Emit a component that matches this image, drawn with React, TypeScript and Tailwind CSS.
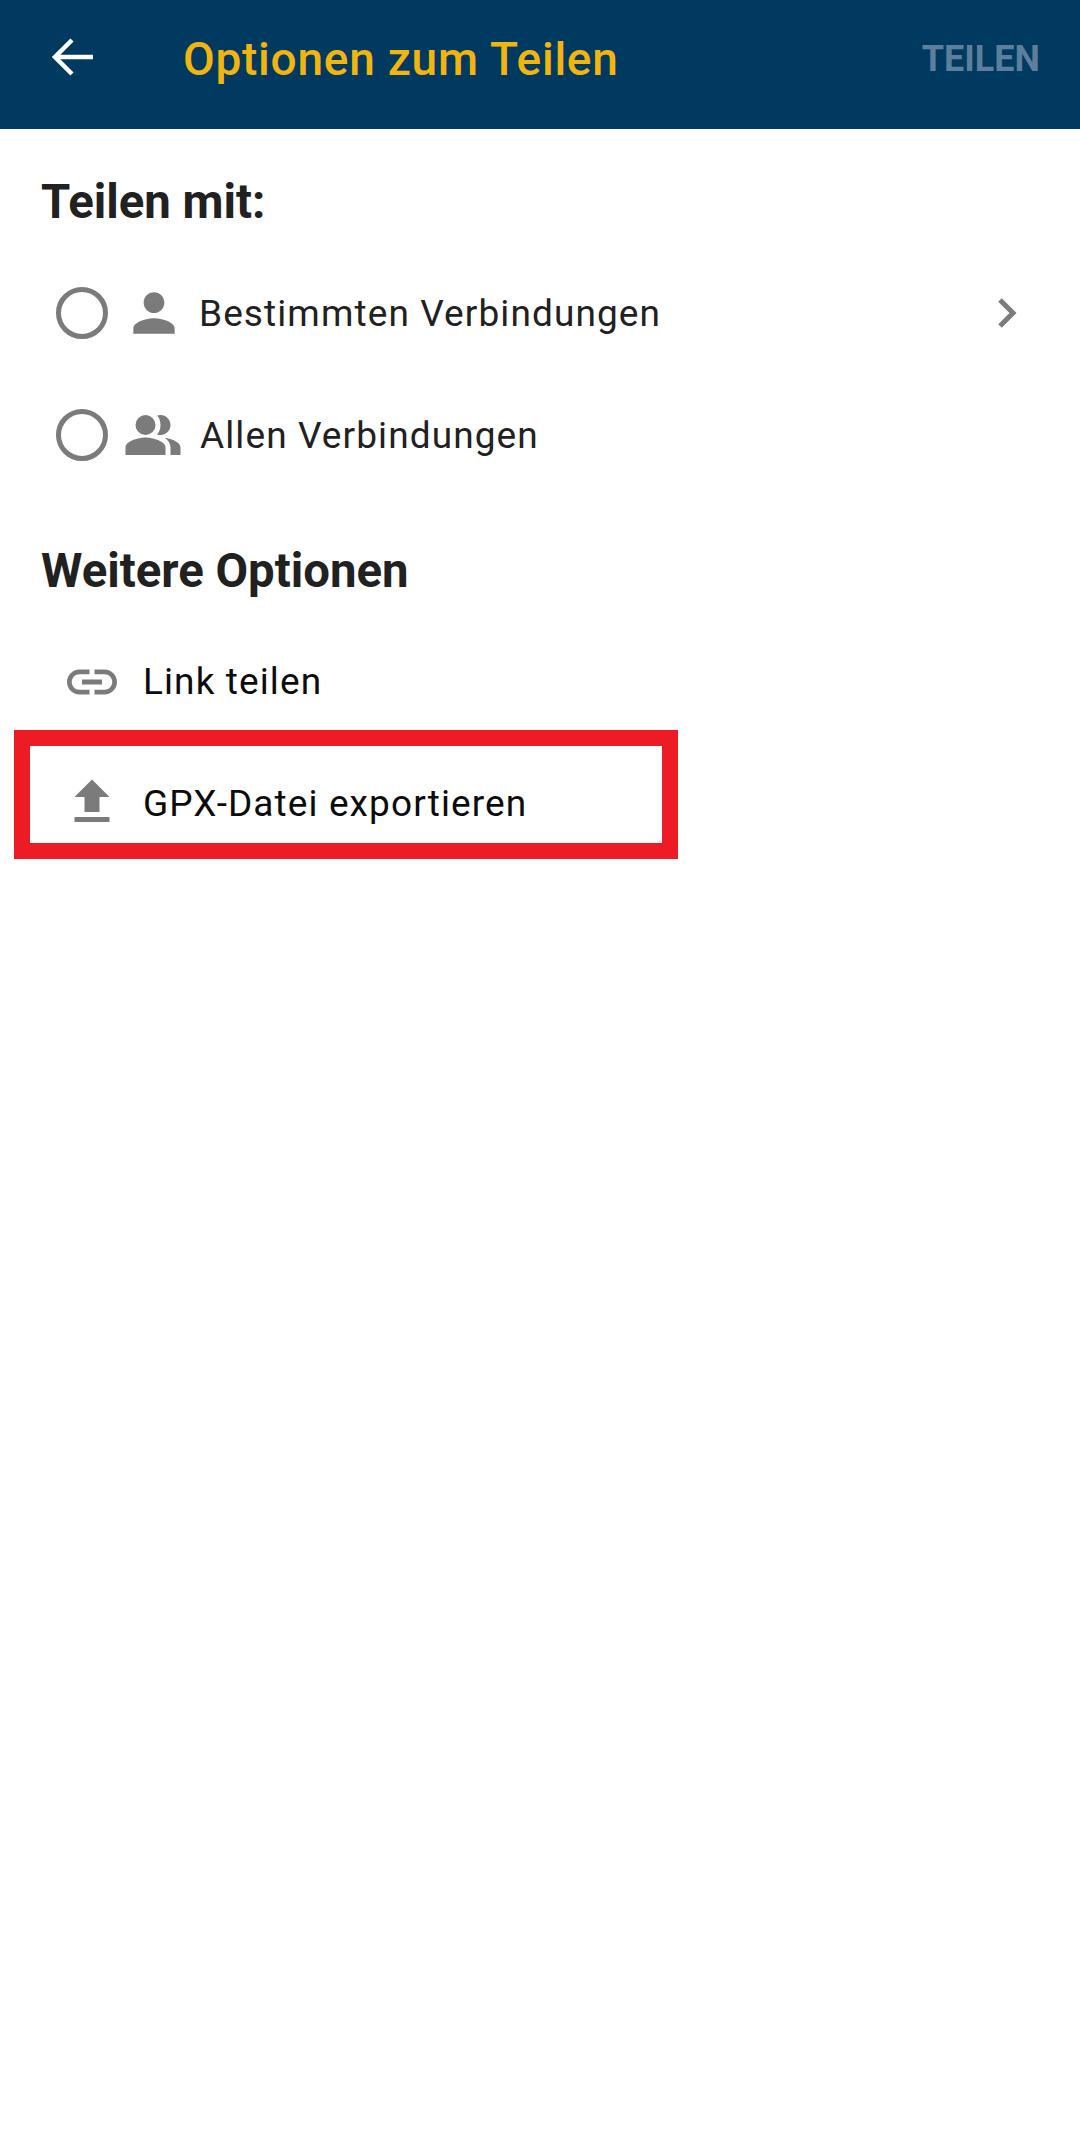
import React from "react";
import { MdPerson, MdPeopleAlt, MdLink, MdFileUpload } from "react-icons/md";

function Radio() {
  return <span className="block w-[52px] h-[52px] rounded-full border-[5px] border-[#7b7b7b] shrink-0" />;
}

export default function App() {
  return (
    <div className="w-[1080px] h-[2137px] bg-white overflow-hidden font-['Roboto',sans-serif]">
      <header className="h-[129px] bg-[#003a60] flex items-center">
        <svg className="ml-[50px] mb-[10px] shrink-0" width="44" height="44" viewBox="0 0 44 44" fill="none" stroke="#fff" strokeWidth="4.5">
          <path d="M43 19 H6" />
          <path d="M22 3 L5 20 L22 37" transform="translate(0 -1)" />
        </svg>
        <h1 className="ml-[89px] mb-[12px] text-[46px] leading-[56px] font-medium text-[#f2b50f] tracking-[0.75px]">Optionen zum Teilen</h1>
        <span className="ml-auto mr-[40px] mb-[12px] text-[36px] leading-[44px] font-bold text-[#5c7f9b]">TEILEN</span>
      </header>
      <main className="pt-[45px]">
        <h2 className="pl-[41px] text-[47.3px] leading-[56px] font-bold text-[#212121]">Teilen mit:</h2>
        <div className="mt-[54px] pl-[56px] pr-[54px] h-[58px] flex items-center">
          <Radio />
          <MdPerson className="ml-[15px] shrink-0 text-[#7b7b7b]" size={62} />
          <span className="ml-[14px] mt-[2px] text-[37px] leading-[48px] tracking-[1.1px] text-[#212121]">Bestimmten Verbindungen</span>
          <svg className="ml-auto shrink-0" width="40" height="40" viewBox="0 0 40 40" fill="none" stroke="#7b7b7b" strokeWidth="5">
            <path d="M14 7 L27 20 L14 33" />
          </svg>
        </div>
        <div className="mt-[64px] pl-[56px] h-[58px] flex items-center">
          <Radio />
          <MdPeopleAlt className="ml-[15px] shrink-0 text-[#7b7b7b]" size={60} />
          <span className="ml-[17px] mt-[2px] text-[37px] leading-[48px] tracking-[1.1px] text-[#212121]">Allen Verbindungen</span>
        </div>
        <h2 className="mt-[79px] pl-[41px] text-[47.3px] leading-[56px] font-bold text-[#212121]">Weitere Optionen</h2>
        <div className="mt-[54px] pl-[62px] h-[58px] flex items-center">
          <MdLink className="shrink-0 text-[#7b7b7b]" size={60} />
          <span className="ml-[21px] text-[37px] leading-[48px] tracking-[1.1px] text-[#0c0c0c]">Link teilen</span>
        </div>
        <div className="mt-[19px] ml-[14px] w-[664px] h-[129px] border-[16px] border-[#ed1c24] flex items-center pl-[32px] pt-[16px]">
          <MdFileUpload className="shrink-0 mb-[2px] text-[#7b7b7b]" size={60} />
          <span className="ml-[21px] mt-[2px] text-[37px] leading-[48px] tracking-[1.1px] text-[#0c0c0c]">GPX-Datei exportieren</span>
        </div>
      </main>
    </div>
  );
}
